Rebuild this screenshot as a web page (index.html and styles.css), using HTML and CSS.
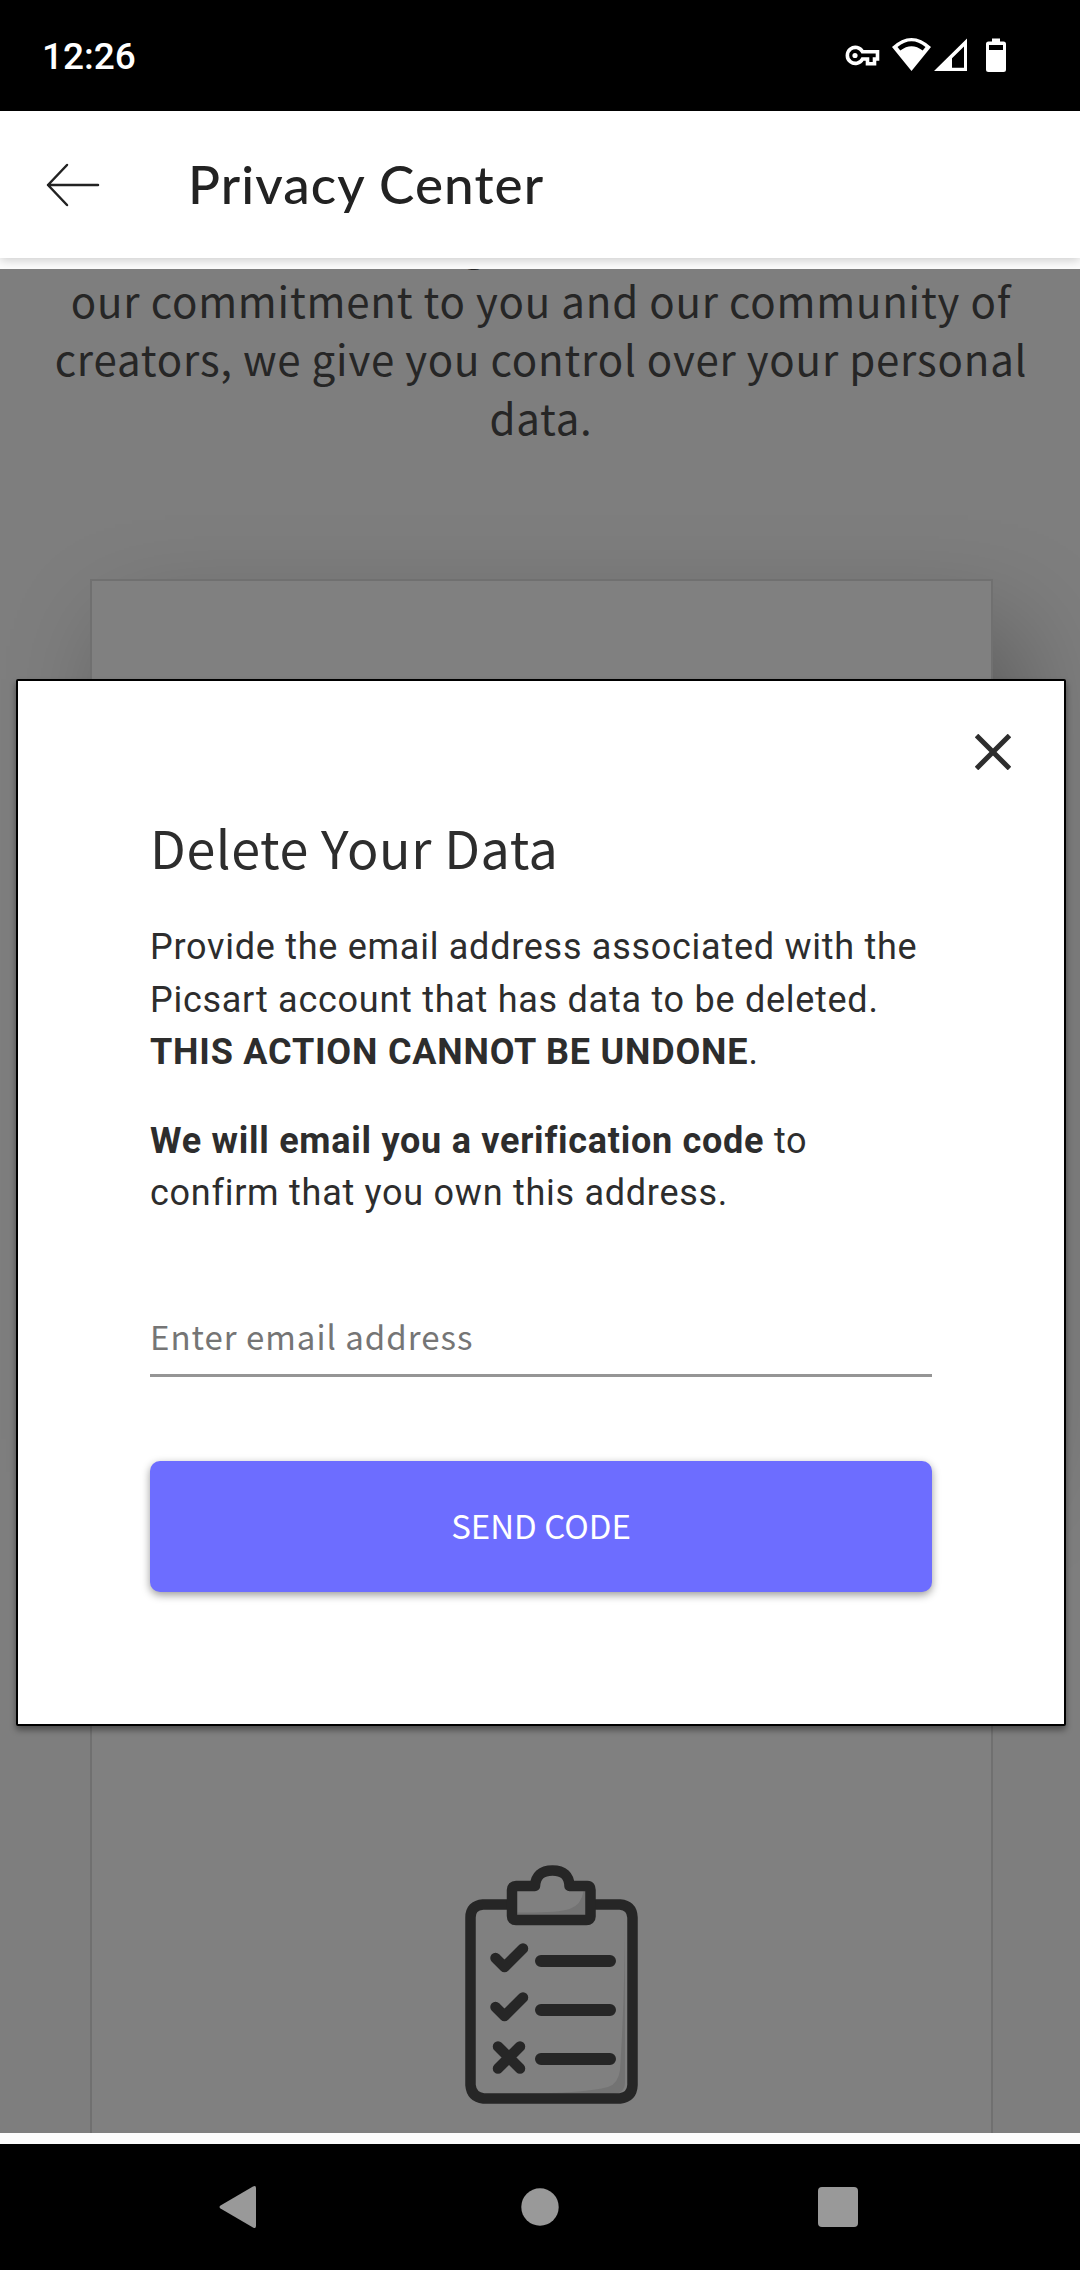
FILE: index.html
```html
<!DOCTYPE html>
<html lang="en">
<head>
<meta charset="utf-8">
<title>Privacy Center</title>
<link rel="stylesheet" href="styles.css">
</head>
<body>
<div class="status-bar">
  <span class="clock">12:26</span>
  <svg class="status-icons" width="164" height="40" viewBox="844 36 164 40" fill="#fff">
    <path fill="none" stroke="#fff" stroke-width="3.600" d="M862.500 51.800h15v7.200h-3v4.800h-7v-4.800h-5a8 8 0 1 1 0-7.200z"/>
    <circle cx="855" cy="55.500" r="2.600"/>
    <path fill-rule="evenodd" d="M892 47q19.500-18 39 0l-19.500 24zM897.500 47l2.800 3.600q11.200-8.600 22.400 0l2.800-3.600q-14-11.500-28 0z"/>
    <path fill-rule="evenodd" d="M934 71L967 38.500V71zM952 67.800h12V46.500l-12 11.800z"/>
    <path fill-rule="evenodd" d="M992 38.500h8V41.500h3.500q2.500 0 2.500 2.500v25.500q0 2.500-2.500 2.500h-15q-2.500 0-2.500-2.500V44q0-2.500 2.500-2.500h3.500zM989 45v5h14v-5z"/>
  </svg>
</div>
<header class="app-bar">
  <svg class="back" width="54" height="44" viewBox="0 0 54 44" fill="none" stroke="#222" stroke-width="2.500" stroke-linecap="round" stroke-linejoin="round"><path d="M52 22H2M21 2L2 22l19 20"/></svg>
  <h1 class="app-title">Privacy Center</h1>
</header>
<main class="web-view">
  <div class="page">
    <p class="intro">Secure data handling is upheld safely. As part of<br>our commitment to you and our community of<br>creators, we give you control over your personal<br>data.</p>
    <section class="card card-raised"></section>
    <section class="card card-request">
      <svg class="clipboard" width="174" height="240" viewBox="465 1864 174 240" fill="none" stroke="#262626" stroke-width="10.500" stroke-linecap="round" stroke-linejoin="round">
        <path stroke="none" fill="#737373" d="M625 1905q0 90-5 165-2 14-12 17-24 7-115 7h120q12 0 12-12zM583.500 1891q-2 14-14 18-12 4-52 3.500v3h68.500v-24.500z"/>
        <path stroke-linecap="butt" d="M510 1904.500H483q-12.500 1-12.500 13V2085q1 12 13 13.500H620q12-1.500 12.500-13.500V1917.500q-.5-12-12.500-13h-27"/>
        <path d="M512 1890q0-4 4-4h19q1-15.500 17.500-15.500T569.500 1886h18q3 0 3 4v26.500q0 3.500-4 3.500H516q-4 0-4-4z"/>
        <path d="M495.500 1958l9 9 18.500-18.500M495.500 2007l9 9 18.500-18.500M498 2046.500l22 22m0-22l-22 22"/>
        <path stroke-width="12" d="M541 1961h69M541 2010h69M541 2059h69"/>
      </svg>
    </section>
  </div>
  <div class="overlay">
    <section class="modal" role="dialog">
      <button class="close" aria-label="Close"><svg width="36" height="36" viewBox="0 0 36 36" stroke="#2d2d2d" stroke-width="5"><path d="M1.500 1.500l33 33m0-33l-33 33"/></svg></button>
      <h2 class="modal-title">Delete Your Data</h2>
      <p class="text">Provide the email address associated with the<br>Picsart account that has data to be deleted.<br><b class="shout">THIS ACTION CANNOT BE UNDONE</b>.</p>
      <p class="text text-second"><b>We will email you a verification code</b> to<br>confirm that you own this address.</p>
      <input class="email" type="email" placeholder="Enter email address">
      <button class="send">SEND CODE</button>
    </section>
  </div>
</main>
<nav class="nav-bar">
  <svg width="38" height="44" viewBox="0 0 38 44" fill="#999"><path d="M34 1.500Q37 0 37 3v38q0 3-3 1.500L1.500 23.500q-2-1.500 0-3z"/></svg>
  <svg width="38" height="38" viewBox="0 0 38 38" fill="#999"><circle cx="19" cy="19" r="18.700"/></svg>
  <svg class="recents" width="40" height="40" viewBox="0 0 40 40" fill="#999"><rect width="40" height="40" rx="4"/></svg>
</nav>
</body>
</html>
```
FILE: styles.css
```css
* { box-sizing: border-box; }
body { margin: 0; width: 1080px; height: 2270px; overflow: hidden; display: flex; flex-direction: column; background: #fcfcfc; font-family: Roboto, sans-serif; color: #2d2d2d; }
h1, h2, p { margin: 0; font-weight: 400; }
svg { display: block; }
.status-bar { height: 111px; flex: none; background: #000; color: #fff; display: flex; justify-content: space-between; align-items: center; padding: 0 72px 0 42px; }
.clock { font-size: 37px; font-weight: 500; padding-top: 1px; }
.app-bar { height: 147px; flex: none; background: #fff; display: flex; align-items: center; padding-left: 46px; gap: 88px; box-shadow: 0 2px 10px rgba(0,0,0,.2); }
.app-title { font-family: Lato, sans-serif; font-size: 53px; font-weight: 500; line-height: 60px; letter-spacing: 1.100px; padding-bottom: 2px; color: #222; }
.web-view { height: 1864px; margin-top: 11px; flex: none; display: grid; overflow: hidden; background: #fff; }
.page, .overlay { grid-area: 1 / 1; min-height: 0; }
.page { background: #7e7e7e; overflow: hidden; display: flex; flex-direction: column; }
.intro { margin-top: -57px; text-align: center; padding-left: 2px; font-family: "Noto Sans CJK SC", sans-serif; font-size: 42px; line-height: 58.500px; letter-spacing: .8px; color: #262626; white-space: nowrap; }
.card { flex: none; width: 903px; margin-left: 90px; border: 2px solid #707070; background: #808080; }
.card-raised { height: 860px; margin-top: 133px; box-shadow: 25px 50px 100px rgba(0,0,0,.3); }
.card-request { position: relative; height: 900px; border-top: 0; padding: 425px 0 0 373px; }
.overlay { position: relative; padding: 410px 14px 0 16px; }
.modal { height: 1047px; border: 2px solid #000; border-radius: 2px; background: #fff; padding: 53px 132px 0; display: flex; flex-direction: column; box-shadow: 0 4px 6px rgba(0,0,0,.4); }
.close { align-self: flex-end; margin-right: -79px; border: 0; background: none; padding: 0; width: 36px; height: 36px; }
.modal-title { font-family: "Noto Sans CJK SC", sans-serif; font-size: 52px; line-height: 72px; letter-spacing: .6px; margin-top: 41px; }
.text { font-size: 36px; line-height: 52.600px; letter-spacing: .73px; margin-top: 38px; white-space: nowrap; }
.text-second { margin-top: 36px; }
.text b { font-weight: 700; }
.text .shout { letter-spacing: .8px; }
.email { margin-top: 63px; height: 94px; flex: none; width: 782px; border: 0; border-bottom: 3px solid #959595; padding: 16px 0 0; font-family: "Noto Sans CJK SC", sans-serif; font-size: 33px; letter-spacing: 1px; background: none; outline: 0; }
.email::placeholder { color: #757575; opacity: 1; }
.send { margin-top: 84px; width: 782px; height: 131px; flex: none; border: 0; border-radius: 10px; padding: 0 6px 2px; background: #6d6dff; color: #fff; font-family: "Noto Sans CJK SC", sans-serif; font-size: 33px; box-shadow: 0 3px 8px rgba(0,0,0,.4); }
.nav-bar { margin-top: 11px; height: 126px; flex: none; background: #000; display: flex; align-items: center; padding-left: 219px; gap: 264px; }
.recents { margin-left: -5px; }
```
